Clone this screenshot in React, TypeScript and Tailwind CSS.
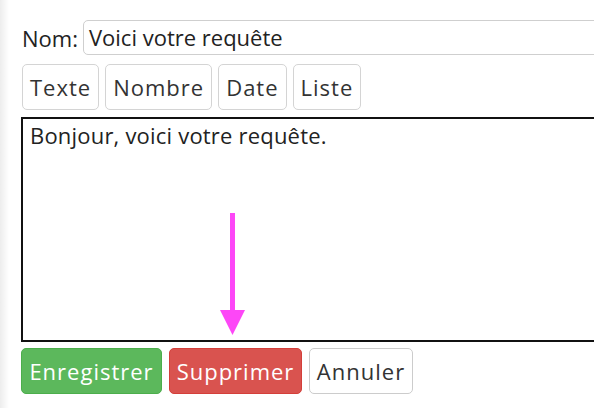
import React from "react";

const font = { fontFamily: '"Open Sans", "Noto Sans", sans-serif' };

export default function App() {
  return (
    <div className="relative flex w-[594px] h-[408px] overflow-hidden bg-white" style={font}>
      <div className="w-[9px] shrink-0 bg-gradient-to-r from-[#ededed] to-white" />
      <div className="flex flex-col pl-[12px] pt-[20px] w-[700px] shrink-0">
        <div className="flex items-center h-[35px]">
          <span className="text-[22px] text-[#222] leading-none pl-[1px] pr-[5px]">Nom:</span>
          <div className="flex items-center h-[35px] w-[600px] border border-[#cfcfcf] rounded-[5px] pl-[5px] text-[22px] text-[#222]">
            Voici votre requête
          </div>
        </div>
        <div className="flex gap-[6px] mt-[9px] pl-[1px]">
          {["Texte", "Nombre", "Date", "Liste"].map((t) => (
            <div
              key={t}
              className="h-[46px] flex items-center px-[7px] border border-[#d4d4d4] rounded-[5px] text-[22px] tracking-[1px] text-[#333]"
            >
              {t}
            </div>
          ))}
        </div>
        <div className="mt-[7px] h-[225px] w-[640px] border-2 border-[#111] px-[7px] pt-[1px] text-[22px] leading-[30px] tracking-[0.2px] text-[#222]">
          Bonjour, voici votre requête.
        </div>
        <div className="flex gap-[7px] mt-[6px]">
          <div className="h-[46px] w-[141px] flex items-center justify-center rounded-[5px] bg-[#5cb85c] border border-[#4cae4c] text-white text-[22px] tracking-[1px]">
            Enregistrer
          </div>
          <div className="h-[46px] w-[133px] flex items-center justify-center rounded-[5px] bg-[#d9534f] border border-[#d43f3a] text-white text-[22px] tracking-[1px]">
            Supprimer
          </div>
          <div className="h-[46px] w-[104px] flex items-center justify-center rounded-[5px] bg-white border border-[#ccc] text-[#333] text-[22px] tracking-[1px]">
            Annuler
          </div>
        </div>
      </div>
      <svg className="absolute left-[219px] top-[212px]" width="28" height="125" viewBox="0 0 28 125">
        <rect x="11" y="1" width="5" height="100" fill="#fd47f7" />
        <polygon points="1,98 26,98 13.5,123" fill="#fd47f7" />
      </svg>
    </div>
  );
}
